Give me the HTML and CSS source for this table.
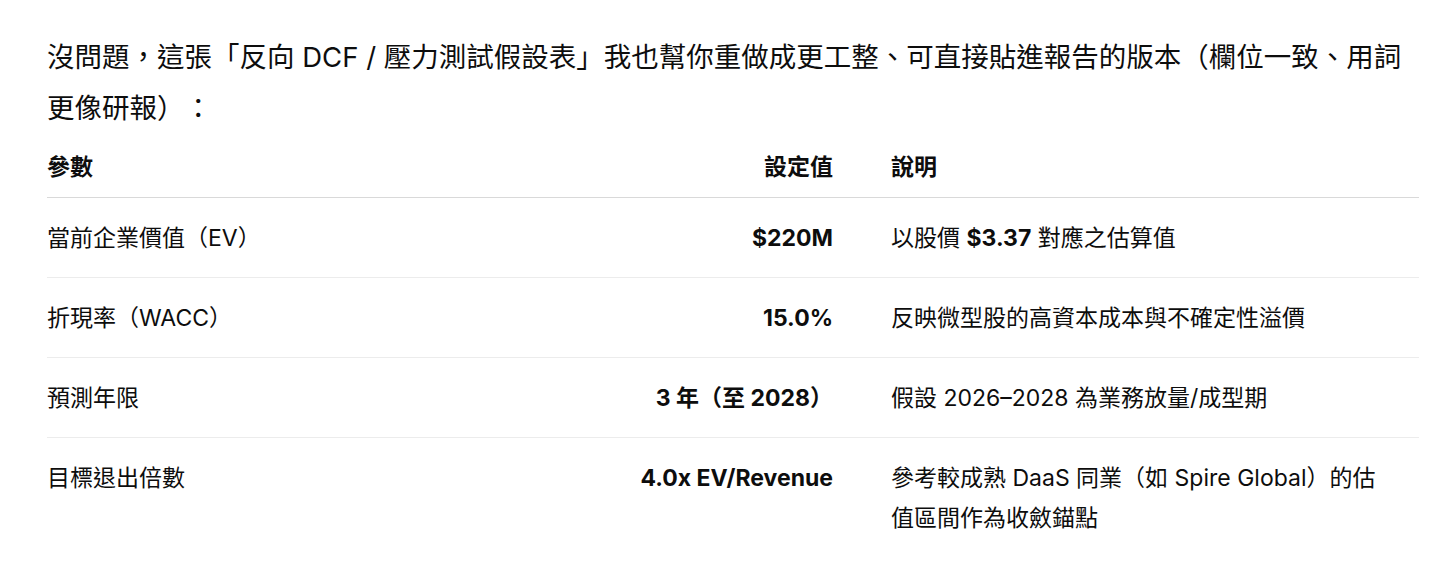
FILE: index.html
```html
<!DOCTYPE html>
<html lang="zh-Hant">
<head>
<meta charset="utf-8">
<link rel="stylesheet" href="styles.css">
</head>
<body>
<div class="wrap">
  <p class="intro">沒問題，這張「反向 DCF / 壓力測試假設表」我也幫你重做成更工整、可直接貼進報告的版本（欄位一致、用詞更像研報）：</p>
  <table class="tbl">
    <colgroup>
      <col class="c1">
      <col class="c2">
      <col class="c3">
    </colgroup>
    <thead>
      <tr>
        <th class="param">參數</th>
        <th class="val">設定值</th>
        <th class="desc">說明</th>
      </tr>
    </thead>
    <tbody>
      <tr>
        <td class="param">當前企業價值（EV）</td>
        <td class="val"><strong>$220M</strong></td>
        <td class="desc">以股價 <strong>$3.37</strong> 對應之估算值</td>
      </tr>
      <tr>
        <td class="param">折現率（WACC）</td>
        <td class="val"><strong>15.0%</strong></td>
        <td class="desc">反映微型股的高資本成本與不確定性溢價</td>
      </tr>
      <tr>
        <td class="param">預測年限</td>
        <td class="val"><strong>3 年（至 2028）</strong></td>
        <td class="desc">假設 2026–2028 為業務放量/成型期</td>
      </tr>
      <tr>
        <td class="param">目標退出倍數</td>
        <td class="val"><strong>4.0x EV/Revenue</strong></td>
        <td class="desc">參考較成熟 DaaS 同業（如 Spire Global）的估值區間作為收斂錨點</td>
      </tr>
    </tbody>
  </table>
</div>
</body>
</html>
```

FILE: styles.css
```css
html, body {
  margin: 0;
  padding: 0;
  background: #ffffff;
}

body {
  font-family: Inter, "Noto Sans CJK TC", "Noto Sans CJK SC", sans-serif;
  color: #0d0d0d;
  text-spacing-trim: space-all;
}

.wrap {
  padding: 32px 0 0 47px;
  width: 1372px;
}

.intro {
  margin: 0;
  font-size: 27.5px;
  line-height: 51px;
  width: 1372px;
}

.tbl {
  margin-top: 13px;
  width: 1372px;
  table-layout: fixed;
  border-collapse: collapse;
  font-size: 23px;
  line-height: 40px;
}

.c1 { width: 500px; }
.c2 { width: 315px; }
.c3 { width: 557px; }

.tbl th {
  font-weight: 700;
  padding: 0 0 10px 0;
  border-bottom: 1px solid #d9d9d9;
  text-align: left;
}

.tbl td {
  padding: 20px 0 19px 0;
  border-bottom: 1px solid #ececec;
  vertical-align: top;
}

.tbl tbody tr:last-child td {
  border-bottom: none;
}

.tbl .val {
  text-align: right;
  padding-right: 29px;
}

.tbl .desc {
  padding-left: 29px;
  padding-right: 32px;
}

.tbl strong {
  font-weight: 700;
}
```
